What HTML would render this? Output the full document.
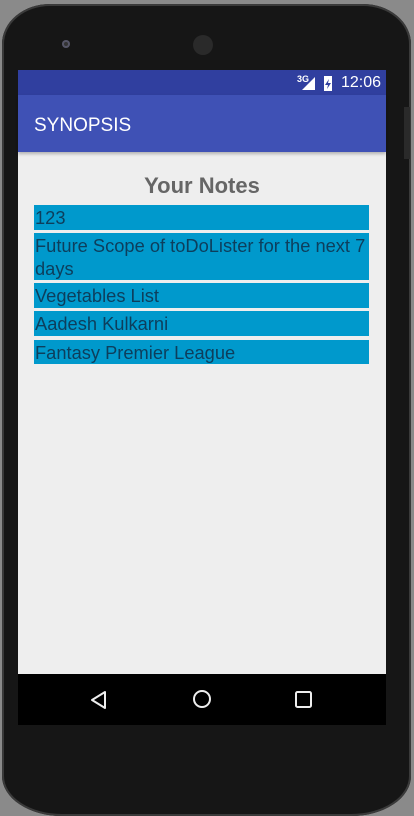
<!DOCTYPE html><html><head><style>
body{margin:0;width:414px;height:815px;background:#8a8a8a;position:relative;overflow:hidden;font-family:"Liberation Sans",sans-serif}
.phone{position:absolute;left:2px;top:4px;width:409px;height:812px;background:#161616;border-radius:48px 48px 60px 60px/40px 40px 40px 40px;box-shadow:inset 0 0 0 2px #3a3a3a}
.screen{position:absolute;left:18px;top:70px;width:368px;height:655px;background:#eeeeee}
.sb{position:absolute;left:0;top:0;width:368px;height:25px;background:#303f9f;color:#fff;font-size:16px}
.ab{position:absolute;left:0;top:25px;width:368px;height:57px;background:#3f51b5;color:#fff;font-size:19px;box-shadow:0 2px 3px rgba(0,0,0,.25)}
.nav{position:absolute;left:0;top:604px;width:368px;height:51px;background:#000}
.it{position:absolute;left:16px;width:335px;background:#0099cc;color:#0d3e5c;font-size:18.3px;line-height:23px;padding-left:1px;padding-top:1px;box-sizing:border-box;white-space:nowrap}
</style></head><body>
<div class="phone"></div>
<div style="position:absolute;left:62px;top:40px;width:8px;height:8px;border-radius:50%;background:#333;box-shadow:inset 0 0 0 2px #556"></div>
<div style="position:absolute;left:193px;top:35px;width:20px;height:20px;border-radius:50%;background:#2a2a2a"></div>
<div style="position:absolute;left:404px;top:107px;width:6px;height:52px;background:#2a2a2a"></div>
<div class="screen">
<div class="sb"><span style="position:absolute;left:279px;top:4px;font-size:9px;font-weight:bold">3G</span>
<svg style="position:absolute;left:282px;top:5px" width="36" height="17"><polygon points="15,15 15,2 2,15" fill="#fff"/><rect x="24" y="1" width="8" height="15" fill="#fff"/><path d="M29 4l-4 6h3l-1 4 4-6h-3z" fill="#303f9f"/></svg>
<span style="position:absolute;left:323px;top:4px">12:06</span></div>
<div class="ab"><span style="position:absolute;left:16px;top:20px">SYNOPSIS</span></div>
<div style="position:absolute;left:0;width:368px;top:103px;text-align:center;font-size:22px;font-weight:bold;color:#666">Your Notes</div>
<div class="it" style="top:135px;height:25px">123</div>
<div class="it" style="top:163px;height:47px;white-space:normal">Future Scope of toDoLister for the next 7 days</div>
<div class="it" style="top:213px;height:25px">Vegetables List</div>
<div class="it" style="top:241px;height:25px">Aadesh Kulkarni</div>
<div class="it" style="top:270px;height:24px">Fantasy Premier League</div>
<div class="nav"><svg width="368" height="51"><path d="M74 26l13-8v16z" fill="none" stroke="#eee" stroke-width="2" stroke-linejoin="round"/><circle cx="184" cy="25" r="8" fill="none" stroke="#eee" stroke-width="2"/><rect x="278" y="18" width="15" height="15" rx="1.5" fill="none" stroke="#eee" stroke-width="2"/></svg></div>
</div>
</body></html>
